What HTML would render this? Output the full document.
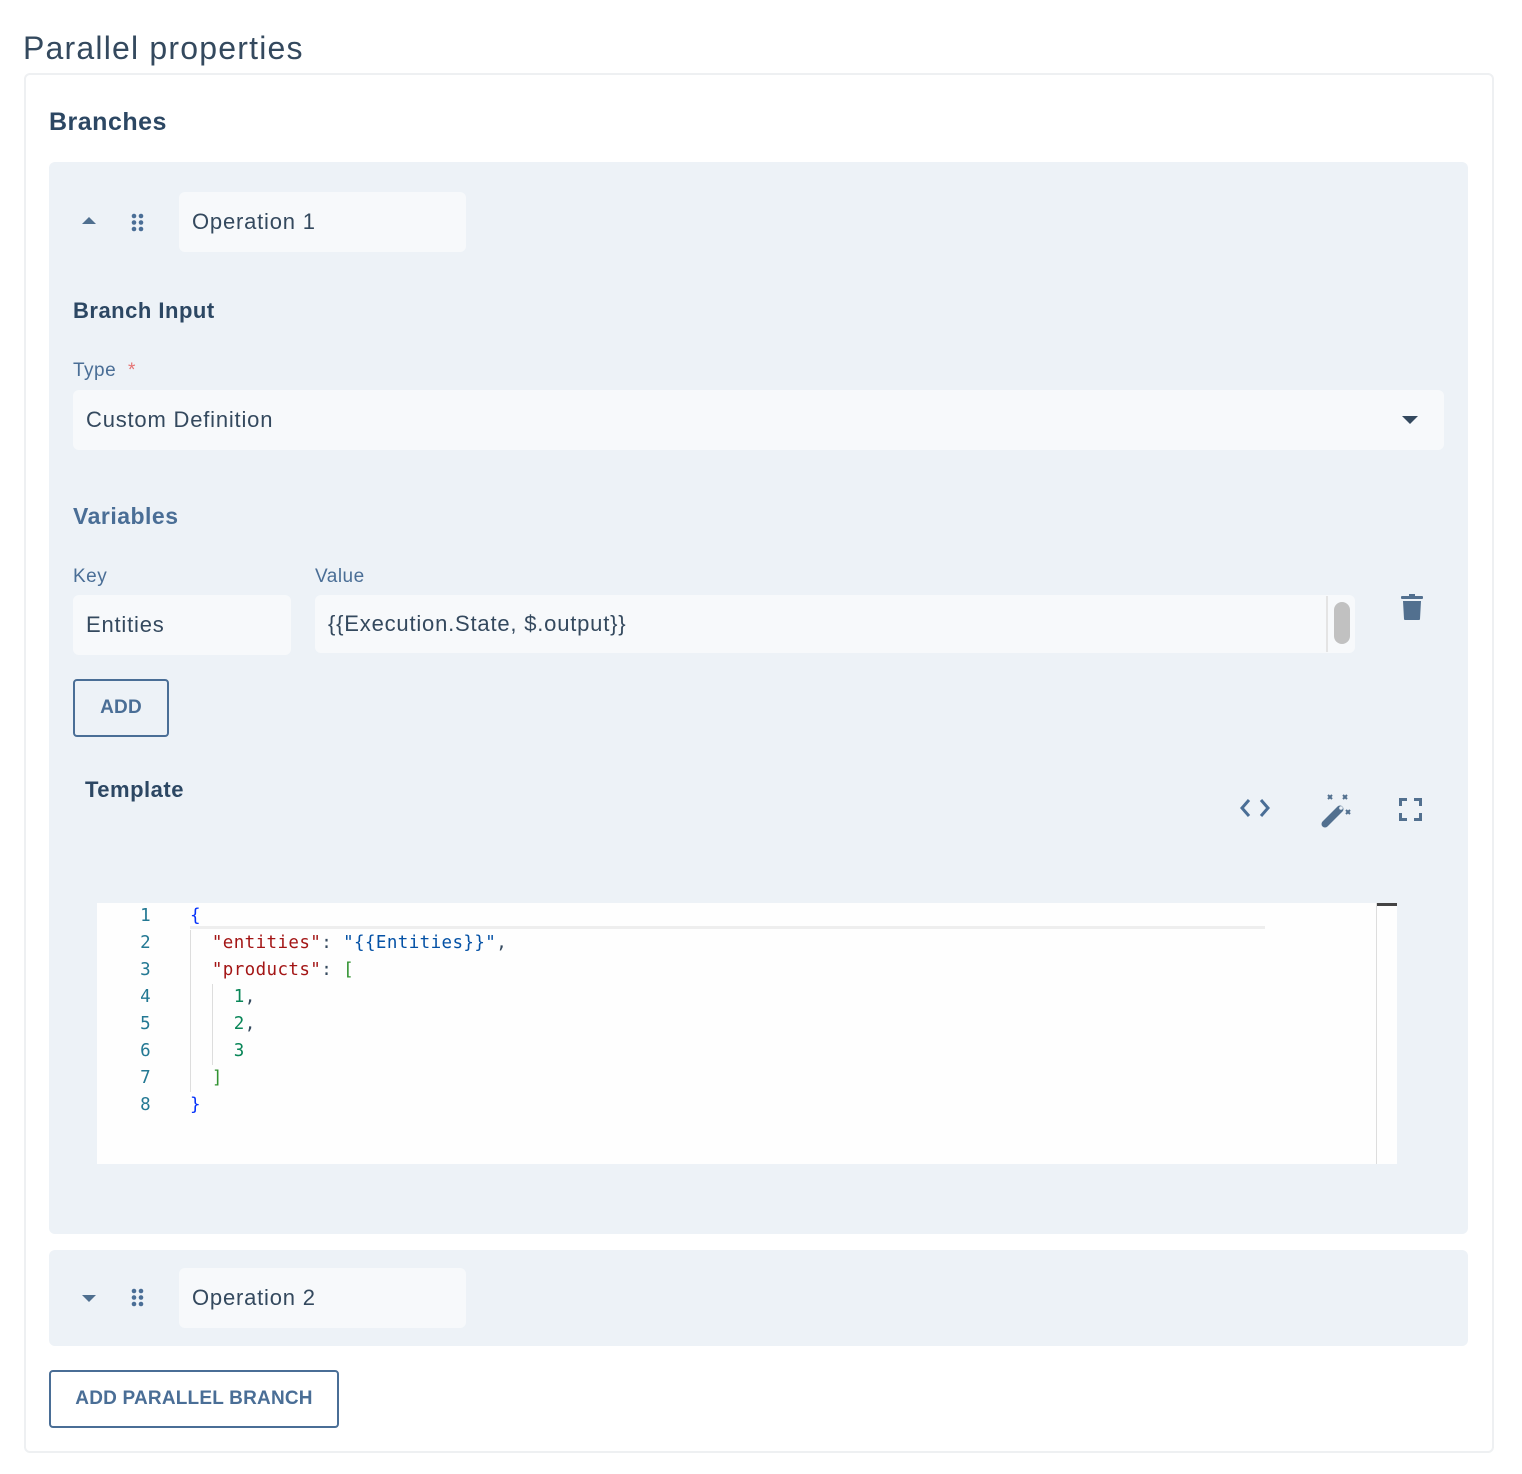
<!DOCTYPE html>
<html><head><meta charset="utf-8"><style>
*{box-sizing:border-box;margin:0;padding:0}
body{width:1522px;height:1474px;background:#fff;font-family:"Liberation Sans",sans-serif;color:#34495e;position:relative;overflow:hidden;letter-spacing:0.5px}
.a{position:absolute}
.in{background:#f7f9fb;border-radius:6px;font-size:22px;color:#34495e;padding-left:13px;display:flex;align-items:center;letter-spacing:0.8px}
.panel{background:#edf2f7;border-radius:6px}
.btn{border:2px solid #4a6e96;border-radius:4px;color:#4a6e96;font-size:19px;font-weight:bold;display:flex;align-items:center;justify-content:center;background:transparent;letter-spacing:0.2px}
.code{font-family:"DejaVu Sans Mono",monospace;font-size:17.5px;line-height:27px;white-space:pre;letter-spacing:0.4px}
.ln{color:#237893;text-align:right;width:54px}
</style></head><body>
<div class="a" style="left:23px;top:30px;font-size:32px;color:#34495e;letter-spacing:1.2px">Parallel properties</div>
<div class="a" style="left:24px;top:73px;width:1470px;height:1380px;border:2px solid #eef0f2;border-radius:6px"></div>
<div class="a" style="left:49px;top:108px;font-size:25px;font-weight:bold;color:#2c4763">Branches</div>

<div class="a panel" style="left:49px;top:162px;width:1419px;height:1072px"></div>
<svg class="a" style="left:81px;top:216px" width="16" height="10"><path d="M1 8 L8 1 L15 8Z" fill="#4f6f8f"/></svg>
<svg class="a" style="left:131px;top:213px" width="14" height="20" fill="#4a6e96"><circle cx="3" cy="3" r="2.3"/><circle cx="10" cy="3" r="2.3"/><circle cx="3" cy="9.5" r="2.3"/><circle cx="10" cy="9.5" r="2.3"/><circle cx="3" cy="16" r="2.3"/><circle cx="10" cy="16" r="2.3"/></svg>
<div class="a in" style="left:179px;top:192px;width:287px;height:60px">Operation 1</div>
<div class="a" style="left:73px;top:298px;font-size:22px;font-weight:bold;color:#2c4763">Branch Input</div>
<div class="a" style="left:73px;top:360px;font-size:19px;color:#4a6e96">Type <span style="color:#e57373;margin-left:6px">*</span></div>
<div class="a in" style="left:73px;top:390px;width:1371px;height:60px">Custom Definition</div>
<svg class="a" style="left:1402px;top:416px" width="16" height="9"><path d="M0 0 L16 0 L8 8Z" fill="#34495e"/></svg>
<div class="a" style="left:73px;top:503px;font-size:23px;font-weight:bold;color:#4a6e96">Variables</div>
<div class="a" style="left:73px;top:566px;font-size:19px;color:#4a6e96">Key</div>
<div class="a" style="left:315px;top:566px;font-size:19px;color:#4a6e96">Value</div>
<div class="a in" style="left:73px;top:595px;width:218px;height:60px">Entities</div>
<div class="a in" style="left:315px;top:595px;width:1040px;height:58px">{{Execution.State, $.output}}</div>
<div class="a" style="left:1326px;top:596px;width:2px;height:56px;background:#e4e4e4"></div>
<div class="a" style="left:1334px;top:602px;width:16px;height:42px;background:#c1c1c1;border-radius:8px"></div>
<svg class="a" style="left:1401px;top:593px" width="24" height="28" fill="#52708f"><rect x="0" y="3" width="22" height="3" rx="1"/><rect x="8" y="1" width="6" height="3"/><path d="M2 8 H20 L19 26 Q19 27 18 27 H4 Q3 27 3 26Z"/></svg>
<div class="a btn" style="left:73px;top:679px;width:96px;height:58px">ADD</div>
<div class="a" style="left:85px;top:777px;font-size:22px;font-weight:bold;color:#2c4763">Template</div>
<svg class="a" style="left:1239px;top:797px" width="32" height="22" fill="none" stroke="#4a6e96" stroke-width="3"><path d="M10 3 L3 11 L10 19 M22 3 L29 11 L22 19"/></svg>
<svg class="a" style="left:1320px;top:792px" width="36" height="36"><g stroke="#52708f" stroke-width="2"><path d="M8 3 L12 7 M12 3 L8 7 M23 3 L27 7 M27 3 L23 7 M26 18 L30 22 M30 18 L26 22"/></g><path d="M5 32 L20 17" stroke="#52708f" stroke-width="7" stroke-linecap="round"/><circle cx="21" cy="16" r="1.8" fill="#edf2f7"/></svg>
<svg class="a" style="left:1399px;top:798px" width="23" height="23" fill="none" stroke="#52708f" stroke-width="3"><path d="M1.5 8 V1.5 H8 M15 1.5 H21.5 V8 M21.5 15 V21.5 H15 M8 21.5 H1.5 V15"/></svg>

<div class="a" style="left:97px;top:903px;width:1300px;height:261px;background:#fefefe"></div>
<div class="a" style="left:190px;top:903px;width:1075px;height:26px;border-bottom:3px solid #eeeeee"></div>
<div class="a" style="left:1376px;top:903px;width:1px;height:261px;background:#ddd"></div>
<div class="a" style="left:1377px;top:903px;width:20px;height:3px;background:#444"></div>
<div class="a" style="left:190px;top:930px;width:1px;height:162px;background:#ddd"></div>
<div class="a" style="left:212px;top:984px;width:1px;height:81px;background:#ddd"></div>
<div class="a code ln" style="left:97px;top:903px">1
2
3
4
5
6
7
8</div>
<div class="a code" style="left:190px;top:903px"><span style="color:#0431fa">{</span>
  <span style="color:#a31515">"entities"</span>: <span style="color:#0451a5">"{{Entities}}"</span>,
  <span style="color:#a31515">"products"</span>: <span style="color:#319331">[</span>
    <span style="color:#098658">1</span>,
    <span style="color:#098658">2</span>,
    <span style="color:#098658">3</span>
  <span style="color:#319331">]</span>
<span style="color:#0431fa">}</span></div>

<div class="a panel" style="left:49px;top:1250px;width:1419px;height:96px"></div>
<svg class="a" style="left:81px;top:1294px" width="16" height="10"><path d="M1 1 L8 8 L15 1Z" fill="#4f6f8f"/></svg>
<svg class="a" style="left:131px;top:1288px" width="14" height="20" fill="#4a6e96"><circle cx="3" cy="3" r="2.3"/><circle cx="10" cy="3" r="2.3"/><circle cx="3" cy="9.5" r="2.3"/><circle cx="10" cy="9.5" r="2.3"/><circle cx="3" cy="16" r="2.3"/><circle cx="10" cy="16" r="2.3"/></svg>
<div class="a in" style="left:179px;top:1268px;width:287px;height:60px">Operation 2</div>
<div class="a btn" style="left:49px;top:1370px;width:290px;height:58px">ADD PARALLEL BRANCH</div>
</body></html>
